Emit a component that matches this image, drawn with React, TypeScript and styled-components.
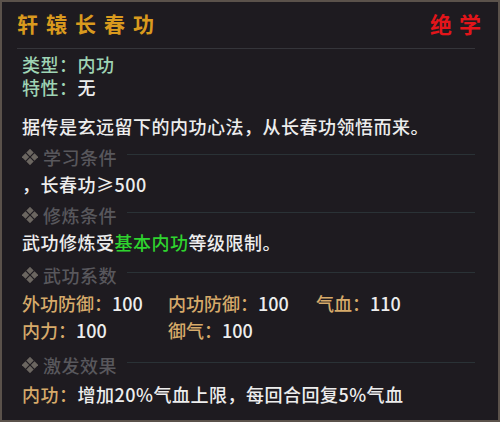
import React from "react";
import styled, { createGlobalStyle } from "styled-components";

const Global = createGlobalStyle`
  html, body { margin: 0; padding: 0; background: #1e1b20; }
  body { width: 500px; height: 422px; overflow: hidden; }
`;

const Card = styled.div`
  box-sizing: border-box;
  width: 500px;
  height: 422px;
  border: 2px solid #5b524b;
  background: #1e1b20;
  font-family: "Noto Sans CJK SC", "Noto Sans", sans-serif;
  color: #ededed;
  display: flex;
  flex-direction: column;
`;

const Header = styled.div`
  height: 46px;
  box-sizing: border-box;
  padding: 0 17px 4px 15px;
  display: flex;
  align-items: center;
  justify-content: space-between;
`;

const Title = styled.div<{ $color: string; $size: number; $spacing: number }>`
  font-size: ${(p) => p.$size}px;
  font-weight: 700;
  color: ${(p) => p.$color};
  letter-spacing: ${(p) => p.$spacing}px;
  line-height: 1;
  margin-right: ${(p) => -p.$spacing}px;
`;

const Separator = styled.div`
  height: 1px;
  margin: 0 23px 0 15px;
  background: #35353a;
`;

const Body = styled.div`
  display: flex;
  flex-direction: column;
  padding: 5px 0 0 20px;
`;

const Line = styled.div<{ $mt: number }>`
  height: 20px;
  margin-top: ${(p) => p.$mt}px;
  display: flex;
  align-items: center;
  font-size: 18px;
  line-height: 20px;
  font-weight: 500;
  white-space: nowrap;
  letter-spacing: 0.5px;
`;

const Colored = styled.span<{ $color: string }>`
  color: ${(p) => p.$color};
`;

const SectionRow = styled.div<{ $mt: number }>`
  height: 20px;
  margin-top: ${(p) => p.$mt}px;
  display: flex;
  align-items: center;
  padding-right: 23px;
`;

const SectionTitle = styled.span`
  font-size: 18px;
  line-height: 20px;
  font-weight: 500;
  color: #58575c;
  margin-left: 5px;
  white-space: nowrap;
  letter-spacing: 0.5px;
`;

const SectionRule = styled.div`
  flex: 1;
  height: 1px;
  background: #2a3236;
  margin-left: 10px;
  margin-top: -5px;
`;

const StatGrid = styled.div<{ $mt: number }>`
  height: 20px;
  margin-top: ${(p) => p.$mt}px;
  display: grid;
  grid-template-columns: 146px 148px auto;
  align-items: center;
  font-size: 18px;
  line-height: 20px;
  font-weight: 500;
  white-space: nowrap;
`;

const Stat = styled.span``;

const Diamond = () => (
  <svg width="16" height="16" viewBox="0 0 16 16">
    <g fill="#6b6660">
      <rect x="5.4" y="0.9" width="5.2" height="5.2" transform="rotate(45 8 3.5)" />
      <rect x="5.4" y="9.9" width="5.2" height="5.2" transform="rotate(45 8 12.5)" />
      <rect x="0.9" y="5.4" width="5.2" height="5.2" transform="rotate(45 3.5 8)" />
      <rect x="9.9" y="5.4" width="5.2" height="5.2" transform="rotate(45 12.5 8)" />
    </g>
  </svg>
);

const Section = ({ title, mt }: { title: string; mt: number }) => (
  <SectionRow $mt={mt}>
    <Diamond />
    <SectionTitle>{title}</SectionTitle>
    <SectionRule />
  </SectionRow>
);

const GOLD = "#d6aa6a";
const MINT = "#9fd4b4";
const GREEN = "#2fd32f";

export default function App() {
  return (
    <>
      <Global />
      <Card>
        <Header>
          <Title $color="#d99a1e" $size={21} $spacing={8}>轩辕长春功</Title>
          <Title $color="#e3151a" $size={22} $spacing={7}>绝学</Title>
        </Header>
        <Separator />
        <Body>
          <Line $mt={0}>
            <Colored $color={MINT}>类型：内功</Colored>
          </Line>
          <Line $mt={3}>
            <Colored $color={MINT}>特性：</Colored>无
          </Line>
          <Line $mt={19}>据传是玄远留下的内功心法，从长春功领悟而来。</Line>
          <Section title="学习条件" mt={11} />
          <Line $mt={7}>，长春功≥500</Line>
          <Section title="修炼条件" mt={11} />
          <Line $mt={7}>
            武功修炼受<Colored $color={GREEN}>基本内功</Colored>等级限制。
          </Line>
          <Section title="武功系数" mt={13} />
          <StatGrid $mt={8}>
            <Stat><Colored $color={GOLD}>外功防御：</Colored>100</Stat>
            <Stat><Colored $color={GOLD}>内功防御：</Colored>100</Stat>
            <Stat><Colored $color={GOLD}>气血：</Colored>110</Stat>
          </StatGrid>
          <StatGrid $mt={7}>
            <Stat><Colored $color={GOLD}>内力：</Colored>100</Stat>
            <Stat><Colored $color={GOLD}>御气：</Colored>100</Stat>
          </StatGrid>
          <Section title="激发效果" mt={15} />
          <Line $mt={9}>
            <Colored $color={GOLD}>内功：</Colored>增加20%气血上限，每回合回复5%气血
          </Line>
        </Body>
      </Card>
    </>
  );
}
